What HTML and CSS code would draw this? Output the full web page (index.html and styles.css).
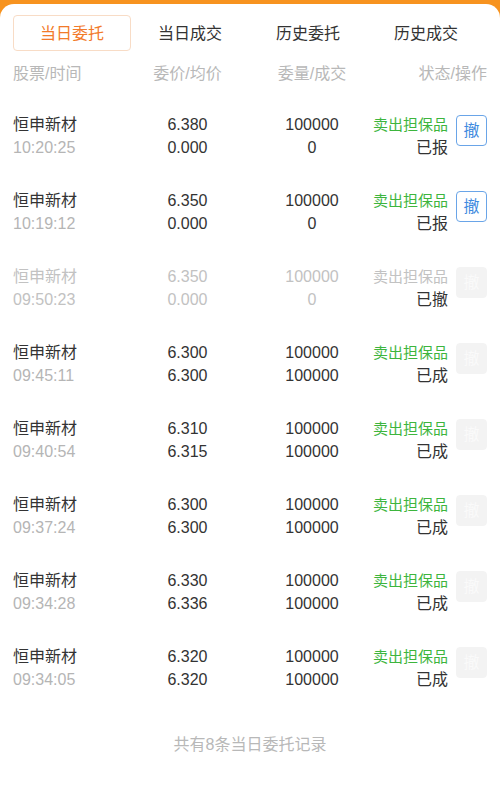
FILE: index.html
```html
<!DOCTYPE html>
<html lang="zh">
<head>
<meta charset="utf-8">
<link rel="stylesheet" href="styles.css">
</head>
<body>
<div class="sheet">
  <div class="tabs">
    <div class="tab active">当日委托</div>
    <div class="tab">当日成交</div>
    <div class="tab">历史委托</div>
    <div class="tab">历史成交</div>
  </div>
  <div class="head">
    <div class="c1">股票/时间</div>
    <div class="c2">委价/均价</div>
    <div class="c3">委量/成交</div>
    <div class="c4">状态/操作</div>
  </div>
  <div class="list">
    <div class="row">
      <div class="c1"><div class="name">恒申新材</div><div class="time">10:20:25</div></div>
      <div class="c2"><div>6.380</div><div>0.000</div></div>
      <div class="c3"><div>100000</div><div>0</div></div>
      <div class="c4"><div class="type">卖出担保品</div><div>已报</div></div>
      <div class="btn">撤</div>
    </div>
    <div class="row">
      <div class="c1"><div class="name">恒申新材</div><div class="time">10:19:12</div></div>
      <div class="c2"><div>6.350</div><div>0.000</div></div>
      <div class="c3"><div>100000</div><div>0</div></div>
      <div class="c4"><div class="type">卖出担保品</div><div>已报</div></div>
      <div class="btn">撤</div>
    </div>
    <div class="row dim">
      <div class="c1"><div class="name">恒申新材</div><div class="time">09:50:23</div></div>
      <div class="c2"><div>6.350</div><div>0.000</div></div>
      <div class="c3"><div>100000</div><div>0</div></div>
      <div class="c4"><div class="type">卖出担保品</div><div class="st">已撤</div></div>
      <div class="btn off">撤</div>
    </div>
    <div class="row">
      <div class="c1"><div class="name">恒申新材</div><div class="time">09:45:11</div></div>
      <div class="c2"><div>6.300</div><div>6.300</div></div>
      <div class="c3"><div>100000</div><div>100000</div></div>
      <div class="c4"><div class="type">卖出担保品</div><div>已成</div></div>
      <div class="btn off">撤</div>
    </div>
    <div class="row">
      <div class="c1"><div class="name">恒申新材</div><div class="time">09:40:54</div></div>
      <div class="c2"><div>6.310</div><div>6.315</div></div>
      <div class="c3"><div>100000</div><div>100000</div></div>
      <div class="c4"><div class="type">卖出担保品</div><div>已成</div></div>
      <div class="btn off">撤</div>
    </div>
    <div class="row">
      <div class="c1"><div class="name">恒申新材</div><div class="time">09:37:24</div></div>
      <div class="c2"><div>6.300</div><div>6.300</div></div>
      <div class="c3"><div>100000</div><div>100000</div></div>
      <div class="c4"><div class="type">卖出担保品</div><div>已成</div></div>
      <div class="btn off">撤</div>
    </div>
    <div class="row">
      <div class="c1"><div class="name">恒申新材</div><div class="time">09:34:28</div></div>
      <div class="c2"><div>6.330</div><div>6.336</div></div>
      <div class="c3"><div>100000</div><div>100000</div></div>
      <div class="c4"><div class="type">卖出担保品</div><div>已成</div></div>
      <div class="btn off">撤</div>
    </div>
    <div class="row">
      <div class="c1"><div class="name">恒申新材</div><div class="time">09:34:05</div></div>
      <div class="c2"><div>6.320</div><div>6.320</div></div>
      <div class="c3"><div>100000</div><div>100000</div></div>
      <div class="c4"><div class="type">卖出担保品</div><div>已成</div></div>
      <div class="btn off">撤</div>
    </div>
  </div>
  <div class="foot">共有8条当日委托记录</div>
</div>
</body>
</html>
```
FILE: styles.css
```css
html, body {
  margin: 0;
  padding: 0;
}
body {
  width: 500px;
  height: 797px;
  background: #f7931f;
  font-family: "Liberation Sans", "Noto Sans CJK SC", sans-serif;
  color: #333;
  overflow: hidden;
}
.sheet {
  margin-top: 4px;
  height: 793px;
  background: #fff;
  border-radius: 14px 14px 0 0;
}
.tabs {
  display: grid;
  grid-template-columns: repeat(4, 1fr);
  padding: 11px 15px 0 13px;
}
.tab {
  height: 36px;
  line-height: 36px;
  text-align: center;
  font-size: 16px;
  color: #333;
  border: 1px solid transparent;
  border-radius: 4px;
  box-sizing: border-box;
}
.tab.active {
  color: #f27a2a;
  border-color: #f8dcc6;
}
.head, .row {
  display: grid;
  grid-template-columns: 102px 145px 104px 92px 31px;
  padding: 0 13px;
}
.head {
  margin-top: 12px;
  height: 35px;
  font-size: 16px;
  line-height: 22px;
  color: #b8b8b8;
}
.head .c4 {
  grid-column: 4 / 6;
  text-align: right;
  margin-right: 0;
}
.c2, .c3 { text-align: center; }
.c4 { text-align: right; white-space: nowrap; margin-right: 8px; }
.row {
  padding-top: 15px;
  padding-bottom: 15px;
  font-size: 16px;
  line-height: 23px;
  color: #333;
}
.time { color: #b5b5b5; }
.type { color: #3db53d; font-size: 15px; }
.btn {
  margin-top: 2px;
  width: 31px;
  height: 31px;
  box-sizing: border-box;
  border: 1px solid #6aa5e8;
  border-radius: 4px;
  color: #3f8be0;
  text-align: center;
  line-height: 29px;
  font-size: 16px;
}
.btn.off {
  border-color: #f3f3f3;
  background: #f3f3f3;
  color: #fafafa;
}
.row.dim, .row.dim .time, .row.dim .type { color: #c2c2c2; }
.row.dim .st { color: #333; }
.foot {
  margin-top: 28px;
  text-align: center;
  font-size: 16px;
  color: #b8b8b8;
  line-height: 22px;
}
```
